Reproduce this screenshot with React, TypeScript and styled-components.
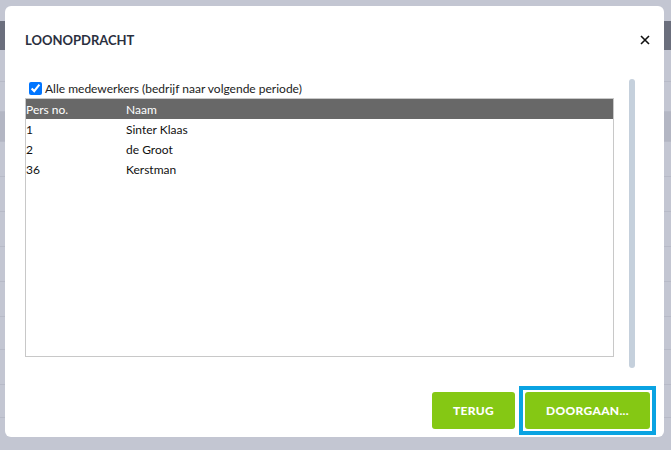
import { useState } from "react";
import styled, { createGlobalStyle } from "styled-components";

const GlobalStyle = createGlobalStyle`
  html, body {
    margin: 0;
    padding: 0;
    width: 671px;
    height: 450px;
    overflow: hidden;
    font-family: "Lato", "Liberation Sans", sans-serif;
  }
`;

// achtergrond-applicatie, gedimd achter de modal
const Backdrop = styled.div`
  position: relative;
  width: 671px;
  height: 450px;
  background-color: #c3c6d2;
  display: flex;
  flex-direction: column;
`;

const TopGap = styled.div`
  height: 21px;
`;

const Toolbar = styled.div`
  height: 29px;
  background-color: #6b6f7d;
`;

const BgRow = styled.div<{ $h: number; $shade?: boolean }>`
  height: ${(p) => p.$h}px;
  border-bottom: 1px solid #b7bac7;
  background-color: ${(p) => (p.$shade ? "#b3b6c3" : "transparent")};
  box-sizing: border-box;
`;

const BgFooter = styled.div`
  flex: 1;
  display: flex;
  padding-left: 195px;
`;

const GreenChip = styled.div`
  width: 52px;
  height: 9px;
  background-color: #a4bead;
`;

const DarkChip = styled.div`
  width: 58px;
  height: 13px;
  background-color: #bcbfcc;
`;

const Modal = styled.div`
  position: absolute;
  left: 5px;
  top: 6px;
  width: 659px;
  height: 431px;
  background: #ffffff;
  border-radius: 6px;
  display: flex;
  flex-direction: column;
  box-sizing: border-box;
`;

const Header = styled.div`
  display: flex;
  align-items: center;
  justify-content: space-between;
  padding: 26px 12px 31px 20px;
`;

const Title = styled.h2`
  margin: 0;
  font-size: 13px;
  line-height: 16px;
  font-weight: 700;
  color: #2b3040;
`;

const CloseBtn = styled.button`
  border: none;
  background: none;
  padding: 0;
  width: 14px;
  height: 14px;
  display: flex;
  align-items: center;
  justify-content: center;
  cursor: pointer;
`;

const Body = styled.div`
  display: flex;
  height: 289px;
  padding-left: 20px;
`;

const Content = styled.div`
  width: 589px;
  display: flex;
  flex-direction: column;
`;

const CheckRow = styled.label`
  display: flex;
  align-items: center;
  height: 19px;
  font-size: 12px;
  color: #222;
  input {
    margin: 3px 3px 3px 4px;
    width: 13px;
    height: 13px;
  }
`;

const TableBox = styled.div`
  height: 259px;
  border: 1px solid #c8c8c8;
  box-sizing: border-box;
`;

const Table = styled.table`
  width: 100%;
  border-collapse: collapse;
  font-size: 12px;
`;

const Th = styled.th<{ $w?: number }>`
  background-color: #686868;
  color: #ffffff;
  font-weight: 400;
  text-align: left;
  height: 20px;
  padding: 0;
  width: ${(p) => (p.$w ? `${p.$w}px` : "auto")};
`;

const Td = styled.td`
  height: 20px;
  padding: 0;
  color: #111;
`;

const Scrollbar = styled.div`
  margin-left: 15px;
  width: 6px;
  height: 289px;
  border-radius: 3px;
  background-color: #c5d0dc;
`;

const Footer = styled.div`
  display: flex;
  justify-content: flex-end;
  align-items: center;
  gap: 4px;
  padding: 18px 8px 0 0;
`;

// focusrand rond de actieve knop, rechte hoeken zoals in het origineel
const FocusRing = styled.span`
  display: inline-flex;
  border: 4px solid #0aa3e2;
  padding: 2px;
  background: #ffffff;
`;

const Button = styled.button<{ $w: number }>`
  width: ${(p) => p.$w}px;
  height: 37px;
  border: none;
  border-radius: 3px;
  background-color: #85c814;
  color: #ffffff;
  font-family: "Lato", "Liberation Sans", sans-serif;
  font-size: 12px;
  font-weight: 900;
  letter-spacing: 0.3px;
  cursor: pointer;
  outline: none;
`;

const employees = [
  { nr: "1", naam: "Sinter Klaas" },
  { nr: "2", naam: "de Groot" },
  { nr: "36", naam: "Kerstman" },
];

export default function App() {
  const [all, setAll] = useState(true);

  return (
    <>
      <GlobalStyle />
      <Backdrop>
        <TopGap />
        <Toolbar />
        <BgRow $h={32} />
        <BgRow $h={30} />
        <BgRow $h={30} $shade />
        <BgRow $h={35} />
        <BgRow $h={35} />
        <BgRow $h={35} />
        <BgRow $h={35} />
        <BgRow $h={35} />
        <BgRow $h={33} />
        <BgRow $h={35} />
        <BgRow $h={33} />
        <BgFooter>
          <GreenChip />
          <DarkChip />
        </BgFooter>

        <Modal>
          <Header>
            <Title>LOONOPDRACHT</Title>
            <CloseBtn aria-label="Sluiten">
              <svg width="10" height="10" viewBox="0 0 10 10">
                <path d="M1 1 L9 9 M9 1 L1 9" stroke="#111" strokeWidth="1.6" />
              </svg>
            </CloseBtn>
          </Header>
          <Body>
            <Content>
              <CheckRow>
                <input
                  type="checkbox"
                  checked={all}
                  onChange={(e) => setAll(e.target.checked)}
                />
                Alle medewerkers (bedrijf naar volgende periode)
              </CheckRow>
              <TableBox>
                <Table>
                  <thead>
                    <tr>
                      <Th $w={100}>Pers no.</Th>
                      <Th>Naam</Th>
                    </tr>
                  </thead>
                  <tbody>
                    {employees.map((e) => (
                      <tr key={e.nr}>
                        <Td>{e.nr}</Td>
                        <Td>{e.naam}</Td>
                      </tr>
                    ))}
                  </tbody>
                </Table>
              </TableBox>
            </Content>
            <Scrollbar />
          </Body>
          <Footer>
            <Button $w={83}>TERUG</Button>
            <FocusRing>
              <Button $w={125}>DOORGAAN...</Button>
            </FocusRing>
          </Footer>
        </Modal>
      </Backdrop>
    </>
  );
}
